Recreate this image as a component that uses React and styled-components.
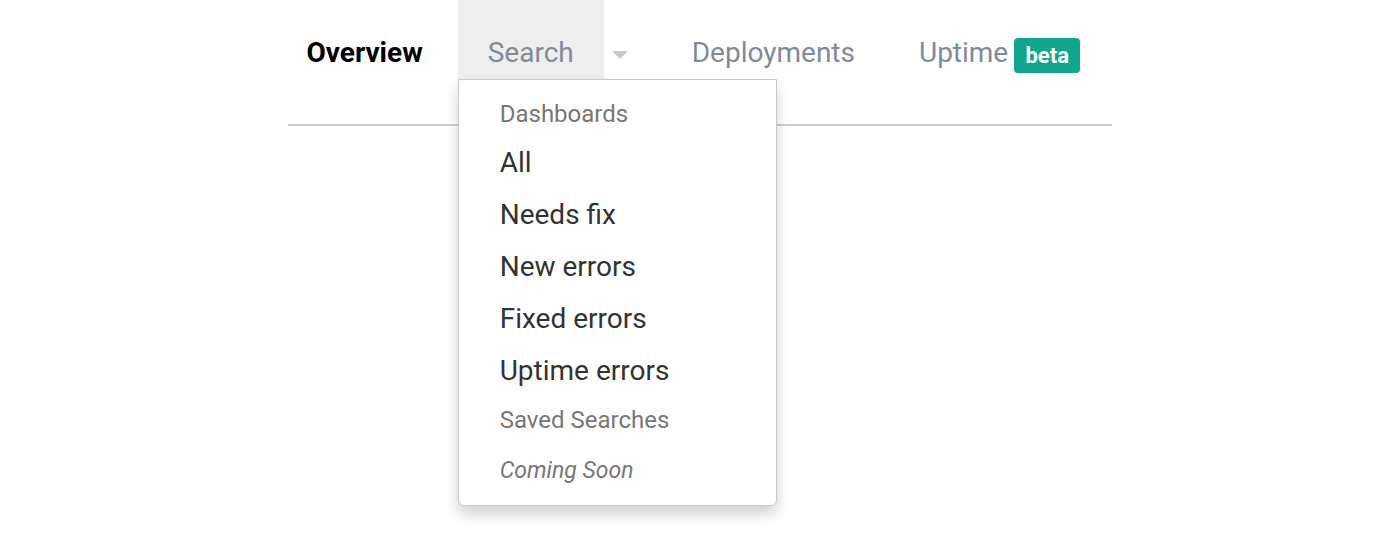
import React from 'react';
import styled, { createGlobalStyle } from 'styled-components';

const GlobalStyle = createGlobalStyle`
  html, body {
    margin: 0;
    padding: 0;
    background: #ffffff;
    font-family: Roboto, "Liberation Sans", Arial, sans-serif;
  }
`

const dashboards = ['All', 'Needs fix', 'New errors', 'Fixed errors', 'Uptime errors']

const App = () => {
  return (
    <>
      <GlobalStyle />
      <Page>
        <Nav>
          <NavItem active first>Overview</NavItem>
          <SearchWrap>
            <Tab>Search</Tab>
            <Caret />
            <Menu>
              <MenuHeader>Dashboards</MenuHeader>
              {dashboards.map((d) => (
                <MenuItem key={d}>{d}</MenuItem>
              ))}
              <MenuHeader>Saved Searches</MenuHeader>
              <ComingSoon>Coming Soon</ComingSoon>
            </Menu>
          </SearchWrap>
          <NavItem offset={64}>Deployments</NavItem>
          <NavItem offset={64}>
            Uptime
            <Badge>beta</Badge>
          </NavItem>
        </Nav>
      </Page>
    </>
  )
}

const Page = styled.div`
  width: 100%;
  height: 554px;
  overflow: hidden;
`

const Nav = styled.nav`
  width: 824px;
  height: 124px;
  margin: 0 auto;
  display: flex;
  align-items: flex-start;
  border-bottom: 2px solid #c9ced3;
`

const NavItem = styled.div`
  display: flex;
  align-items: flex-start;
  height: 79px;
  padding-top: 33px;
  box-sizing: border-box;
  margin-left: ${(p) => (p.first ? 18.5 : p.offset || 0)}px;
  margin-right: ${(p) => (p.first ? 35 : 0)}px;
  font-size: 28px;
  line-height: 40px;
  font-weight: ${(p) => (p.active ? 700 : 400)};
  color: ${(p) => (p.active ? '#000000' : '#7f8b99')};
  white-space: nowrap;
`

const SearchWrap = styled.div`
  position: relative;
  display: flex;
  align-items: flex-start;
`

const Tab = styled.div`
  height: 79px;
  padding: 33px 30px 0;
  box-sizing: border-box;
  background: #eeeeee;
  font-size: 28px;
  line-height: 40px;
  color: #7f8b99;
`

const Caret = styled.span`
  width: 0;
  height: 0;
  margin: 51px 0 0 8px;
  border-left: 8px solid transparent;
  border-right: 8px solid transparent;
  border-top: 8px solid #c4c9d0;
`

const Menu = styled.div`
  position: absolute;
  top: 79px;
  left: 0;
  width: 319px;
  box-sizing: border-box;
  padding: 11px 0 6px 41px;
  background: #ffffff;
  border: 1px solid #c9c9c9;
  border-radius: 0 0 6px 6px;
  box-shadow: 0 8px 14px rgba(0, 0, 0, 0.18);
  z-index: 2;
`

const MenuHeader = styled.div`
  margin: 9px 0;
  font-size: 24px;
  line-height: 28px;
  color: #777777;
`

const MenuItem = styled.div`
  font-size: 28px;
  line-height: 52px;
  color: #333333;
`

const ComingSoon = styled.div`
  font-size: 23px;
  line-height: 56px;
  font-style: italic;
  color: #777777;
`

const Badge = styled.span`
  display: inline-flex;
  align-items: center;
  justify-content: center;
  height: 35px;
  width: 66px;
  margin-left: 6px;
  margin-top: 5px;
  border-radius: 4px;
  background: #0fa68c;
  color: #ffffff;
  font-size: 22px;
  font-weight: 700;
  line-height: 1;
`

export default App;
